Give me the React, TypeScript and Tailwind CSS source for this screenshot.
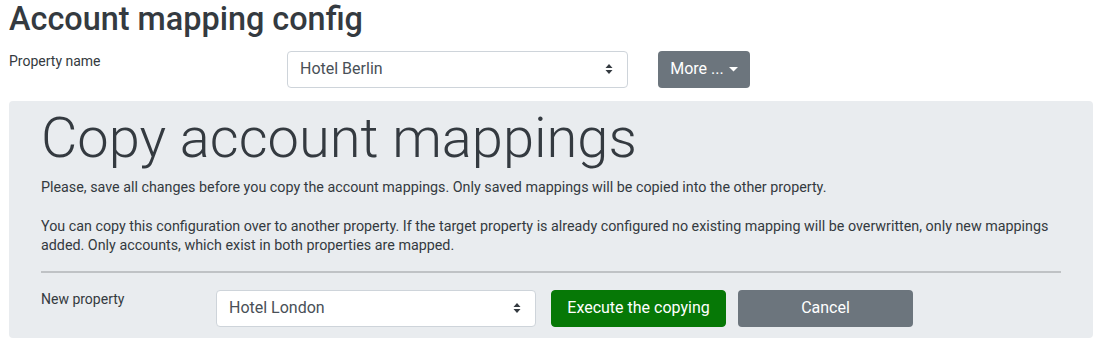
import React from "react";

function Arrows() {
  return (
    <svg width="8" height="12" viewBox="0 0 8 12" className="shrink-0">
      <path d="M4 1 L7.5 5 L0.5 5 Z" fill="#343a40" />
      <path d="M4 11 L7.5 7 L0.5 7 Z" fill="#343a40" />
    </svg>
  );
}

function Select({ value, className }: { value: string; className: string }) {
  return (
    <div
      className={
        "flex items-center justify-between h-[37px] bg-white border border-[#ced4da] rounded-[4px] pl-[12px] pr-[14px] text-[16px] text-[#495057] " +
        className
      }
    >
      <span>{value}</span>
      <Arrows />
    </div>
  );
}

export default function App() {
  return (
    <div
      className="w-[1102px] h-[345px] bg-white px-[9px] text-[#343a40]"
      style={{ fontFamily: "Roboto, 'Noto Sans', sans-serif" }}
    >
      <h2 className="text-[32.4px] leading-[1.2] font-medium text-[#343a40] m-0">
        Account mapping config
      </h2>
      <div className="flex items-start mt-[12px]">
        <div className="w-[278px] text-[14px] leading-[21px] pt-0">Property name</div>
        <Select value="Hotel Berlin" className="w-[341px]" />
        <button className="ml-[30px] h-[37px] w-[92px] rounded-[4px] bg-[#6c757d] text-white text-[16px] flex items-center justify-center gap-[5px]">
          <span>More ...</span>
          <svg width="9" height="5" viewBox="0 0 9 5">
            <path d="M0 0 L9 0 L4.5 4.5 Z" fill="white" />
          </svg>
        </button>
      </div>
      <div className="mt-[13px] w-[1084px] bg-[#e9ecef] rounded-[4px] px-[32px] pt-[4px] pb-[11px]">
        <h1 className="text-[56px] leading-[1.2] font-light text-[#343a40]">
          Copy account mappings
        </h1>
        <p className="mt-[6px] text-[14.3px] leading-[19.5px]">
          Please, save all changes before you copy the account mappings. Only saved mappings will be copied into the other property.
        </p>
        <p className="mt-[19px] text-[14.3px] leading-[19.5px]">
          You can copy this configuration over to another property. If the target property is already configured no existing mapping will be overwritten, only new mappings added. Only accounts, which exist in both properties are mapped.
        </p>
        <div className="mt-[15px] h-[2px] bg-[#bfc2c5]" />
        <div className="flex items-start mt-[17px]">
          <div className="w-[175px] text-[14px] leading-[19.5px]">New property</div>
          <Select value="Hotel London" className="w-[320px]" />
          <button className="ml-[15px] h-[37px] w-[175px] rounded-[4px] bg-[#067806] text-white text-[16px] border border-[#067806]">
            Execute the copying
          </button>
          <button className="ml-[12px] h-[37px] w-[175px] rounded-[4px] bg-[#6c757d] text-white text-[16px]">
            Cancel
          </button>
        </div>
      </div>
    </div>
  );
}
